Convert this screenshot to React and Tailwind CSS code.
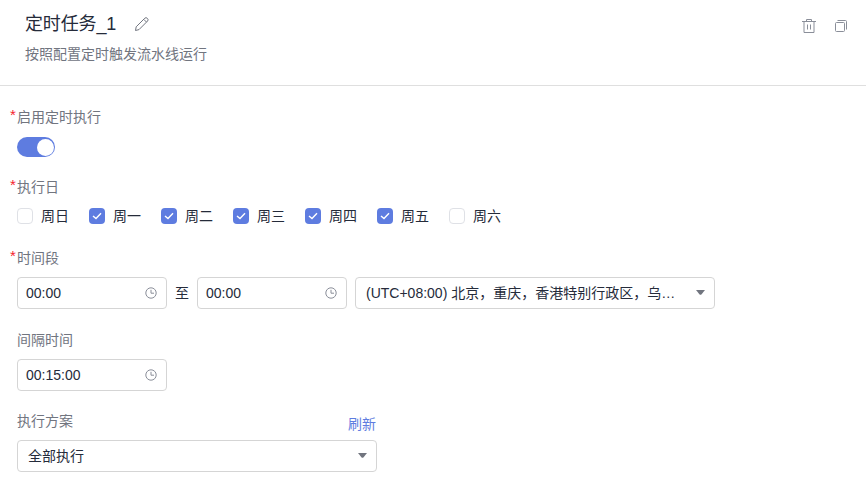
import React from "react";

function Clock() {
  return (
    <svg width="12" height="12" viewBox="0 0 12 12" fill="none" stroke="#8a8e99" strokeWidth="1" className="shrink-0 -mt-[1px]">
      <circle cx="6" cy="6" r="5.2" />
      <path d="M6 2.8V6.2H9" />
    </svg>
  );
}

function Caret() {
  return (
    <svg width="9" height="5" viewBox="0 0 9 5" className="shrink-0 -mt-[1px]">
      <path d="M0 0H9L5.4 4.4Q4.5 5 3.6 4.4Z" fill="#71757f" />
    </svg>
  );
}

function Label({ children, required }) {
  return (
    <div className="relative h-[20px] leading-[20px] text-[14px] text-[#71757f]">
      {required && <span className="absolute left-[-7px] top-[-2px] text-[#f5222d] text-[15px]">*</span>}
      {children}
    </div>
  );
}

function TimeInput({ value }) {
  return (
    <div className="w-[150px] h-[32px] flex items-center justify-between pl-[8px] pr-[9px] border border-[#d5d5d5] rounded-[4px] text-[14px] text-[#252b3a] bg-white">
      <span>{value}</span>
      <Clock />
    </div>
  );
}

function Check({ label, checked }) {
  return (
    <div className="w-[72px] flex items-center gap-[8px]">
      {checked ? (
        <span className="w-[16px] h-[16px] rounded-[4px] bg-[#5e7ce0] flex items-center justify-center">
          <svg width="10" height="8" viewBox="0 0 10 8" fill="none" stroke="#fff" strokeWidth="1.4">
            <path d="M1 4L4 6.6L9 1.2" />
          </svg>
        </span>
      ) : (
        <span className="w-[16px] h-[16px] rounded-[4px] border border-[#dfe1e6] bg-white" />
      )}
      <span className="text-[14px] text-[#252b3a]">{label}</span>
    </div>
  );
}

export default function App() {
  return (
    <div className="w-[866px] h-[482px] overflow-hidden bg-white" style={{ fontFamily: '"Liberation Sans", "Noto Sans CJK SC", sans-serif' }}>
      <header className="h-[86px] border-b border-[#dfdfdf] pl-[25px] pr-[18px] flex justify-between">
        <div>
          <div className="flex items-center h-[24px] mt-[12px] text-[18px] text-[#252b3a] tracking-[-0.15px]">
            <span>定时任务_1</span>
            <svg width="16" height="16" viewBox="0 0 16 16" fill="none" stroke="#71757f" strokeWidth="1" className="ml-[18px]">
              <path d="M1.5 14.5L2.2 10.8L10.8 2.2Q12 1 13.4 2.4Q14.8 3.8 13.6 5L5 13.6Z" />
              <path d="M9.8 3.4L12.5 6.1" />
            </svg>
          </div>
          <div className="mt-[8px] h-[20px] leading-[20px] text-[14px] text-[#71757f]">按照配置定时触发流水线运行</div>
        </div>
        <div className="flex gap-[18px] mt-[19px] h-[14px]">
          <svg width="14" height="14" viewBox="0 0 14 14" fill="none" stroke="#8a8e99" strokeWidth="1">
            <path d="M0 2.5H14M4.5 2.5V0.5H9.5V2.5M2 2.5V13.5H12V2.5M5.5 5.5V10.5M8.5 5.5V10.5" />
          </svg>
          <svg width="14" height="14" viewBox="0 0 14 14" fill="none" stroke="#8a8e99" strokeWidth="1">
            <rect x="1.5" y="3.5" width="9" height="9" rx="1" />
            <path d="M3.5 1.5H11.5Q12.5 1.5 12.5 2.5V10.5" />
          </svg>
        </div>
      </header>

      <main className="pl-[17px] pt-[21px] flex flex-col">
        <Label required>启用定时执行</Label>
        <div className="mt-[10px] w-[38px] h-[20px] rounded-full bg-[#5e7ce0] flex items-center justify-end pr-[1px]">
          <span className="w-[17px] h-[17px] rounded-full bg-white" />
        </div>

        <div className="mt-[20px]"><Label required>执行日</Label></div>
        <div className="mt-[11px] flex h-[16px] items-center">
          <Check label="周日" />
          <Check label="周一" checked />
          <Check label="周二" checked />
          <Check label="周三" checked />
          <Check label="周四" checked />
          <Check label="周五" checked />
          <Check label="周六" />
        </div>

        <div className="mt-[24px]"><Label required>时间段</Label></div>
        <div className="mt-[9px] flex items-center">
          <TimeInput value="00:00" />
          <span className="w-[30px] text-center text-[14px] text-[#252b3a]">至</span>
          <TimeInput value="00:00" />
          <div className="ml-[8px] w-[360px] h-[32px] flex items-center justify-between pl-[10px] pr-[9px] border border-[#d5d5d5] rounded-[4px] text-[14px] text-[#252b3a]">
            <span>(UTC+08:00) 北京，重庆，香港特别行政区，乌…</span>
            <Caret />
          </div>
        </div>

        <div className="mt-[21px]"><Label>间隔时间</Label></div>
        <div className="mt-[9px]"><TimeInput value="00:15:00" /></div>

        <div className="mt-[20px] w-[359px] flex justify-between items-end">
          <Label>执行方案</Label>
          <span className="text-[14px] leading-[20px] text-[#5e7ce0] -mb-[3px]">刷新</span>
        </div>
        <div className="mt-[9px] w-[360px] h-[32px] flex items-center justify-between pl-[10px] pr-[9px] border border-[#d5d5d5] rounded-[4px] text-[14px] text-[#252b3a]">
          <span>全部执行</span>
          <Caret />
        </div>
      </main>
    </div>
  );
}
